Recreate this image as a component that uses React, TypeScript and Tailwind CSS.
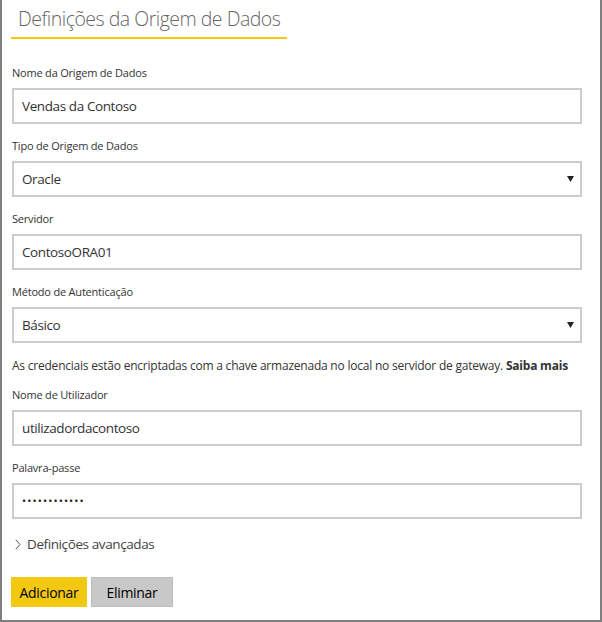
import React from "react";

const font = { fontFamily: '"Open Sans", "Noto Sans", sans-serif' };

function Label({ children }: { children: React.ReactNode }) {
  return <div className="text-[11px] leading-[14px] text-[#333] tracking-[-0.2px]">{children}</div>;
}

function Field({ value }: { value: string }) {
  return (
    <div className="mt-[8px] h-[36px] w-[570px] border-2 border-[#cccccc] flex items-center pl-[8px] text-[13.5px] tracking-[-0.4px] text-[#333]">
      {value}
    </div>
  );
}

function Select({ value }: { value: string }) {
  return (
    <div className="mt-[8px] h-[36px] w-[570px] border-2 border-[#cccccc] flex items-center justify-between pl-[8px] pr-[6px] text-[13.5px] tracking-[-0.4px] text-[#333]">
      <span>{value}</span>
      <svg width="7" height="6" viewBox="0 0 7 6">
        <path d="M0 0 H7 L3.5 6 Z" fill="#222" />
      </svg>
    </div>
  );
}

export default function App() {
  return (
    <div
      style={font}
      className="w-[602px] h-[622px] bg-white border-l-2 border-r-2 border-b-2 border-[#7f7f7f] pl-[10px] box-border"
    >
      <div className="pt-[5px] pl-[6px] text-[19.5px] leading-[28px] font-light tracking-[-0.5px] text-[#666]">
        Definições da Origem de Dados
      </div>
      <div className="mt-[4px] ml-[-1px] h-[2px] w-[276px] bg-[#f2c811]" />

      <div className="mt-[27px]">
        <Label>Nome da Origem de Dados</Label>
        <Field value="Vendas da Contoso" />
      </div>
      <div className="mt-[15px]">
        <Label>Tipo de Origem de Dados</Label>
        <Select value="Oracle" />
      </div>
      <div className="mt-[15px]">
        <Label>Servidor</Label>
        <Field value="ContosoORA01" />
      </div>
      <div className="mt-[15px]">
        <Label>Método de Autenticação</Label>
        <Select value="Básico" />
      </div>
      <div className="mt-[15px] text-[12px] leading-[16px] tracking-[-0.22px] text-[#333] whitespace-nowrap">
        As credenciais estão encriptadas com a chave armazenada no local no servidor de gateway.{" "}
        <span className="font-bold">Saiba mais</span>
      </div>
      <div className="mt-[14px]">
        <Label>Nome de Utilizador</Label>
        <Field value="utilizadordacontoso" />
      </div>
      <div className="mt-[15px]">
        <Label>Palavra-passe</Label>
        <div className="mt-[8px] h-[36px] w-[570px] border-2 border-[#cccccc] flex items-center pl-[8px] text-[11px] tracking-[1.1px] text-[#222]">
          ••••••••••••
        </div>
      </div>
      <div className="mt-[15px] ml-[3px] flex items-center gap-[6px] text-[13.5px] tracking-[-0.4px] text-[#444]">
        <svg width="6" height="11" viewBox="0 0 6 11">
          <path d="M0.8 0.8 L5 5.5 L0.8 10.2" fill="none" stroke="#555" strokeWidth="1" />
        </svg>
        <span>Definições avançadas</span>
      </div>
      <div className="mt-[23px] flex gap-[4px] ml-[-1px]">
        <button className="h-[30px] w-[76px] bg-[#f2c811] text-[14px] tracking-[-0.3px] text-black">Adicionar</button>
        <button className="h-[30px] w-[82px] bg-[#c8c8c8] border border-[#bdbdbd] text-[14px] tracking-[-0.3px] text-black">Eliminar</button>
      </div>
    </div>
  );
}
